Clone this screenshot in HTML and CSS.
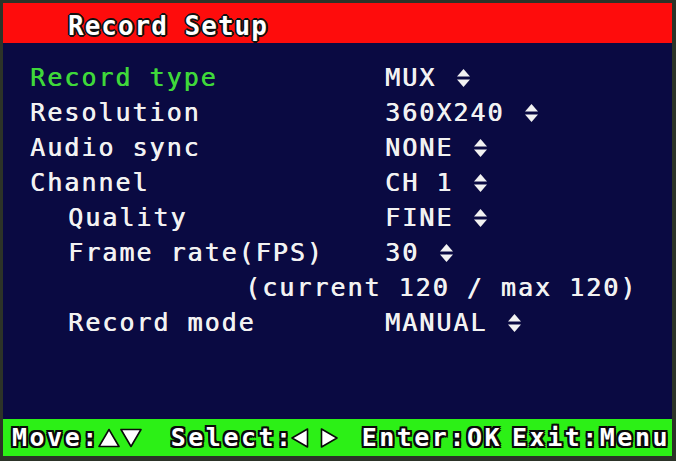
FILE: index.html
```html
<!DOCTYPE html>
<html lang="en">
<head>
  <meta charset="UTF-8">
  <title>Record Setup</title>
  <link rel="stylesheet" href="styles.css">
</head>
<body>
  <div class="screen">
    <div class="header">Record Setup</div>

    <div class="menu">
      <div class="row selected">
        <span class="label">Record type</span>
        <span class="value">MUX <svg class="updown" viewBox="0 0 13 18"><polygon points="6.5,0 13,7.5 0,7.5"/><polygon points="0,10.5 13,10.5 6.5,18"/></svg></span>
      </div>
      <div class="row">
        <span class="label">Resolution</span>
        <span class="value">360X240 <svg class="updown" viewBox="0 0 13 18"><polygon points="6.5,0 13,7.5 0,7.5"/><polygon points="0,10.5 13,10.5 6.5,18"/></svg></span>
      </div>
      <div class="row">
        <span class="label">Audio sync</span>
        <span class="value">NONE <svg class="updown" viewBox="0 0 13 18"><polygon points="6.5,0 13,7.5 0,7.5"/><polygon points="0,10.5 13,10.5 6.5,18"/></svg></span>
      </div>
      <div class="row">
        <span class="label">Channel</span>
        <span class="value">CH 1 <svg class="updown" viewBox="0 0 13 18"><polygon points="6.5,0 13,7.5 0,7.5"/><polygon points="0,10.5 13,10.5 6.5,18"/></svg></span>
      </div>
      <div class="row sub">
        <span class="label">Quality</span>
        <span class="value">FINE <svg class="updown" viewBox="0 0 13 18"><polygon points="6.5,0 13,7.5 0,7.5"/><polygon points="0,10.5 13,10.5 6.5,18"/></svg></span>
      </div>
      <div class="row sub">
        <span class="label">Frame rate(FPS)</span>
        <span class="value">30 <svg class="updown" viewBox="0 0 13 18"><polygon points="6.5,0 13,7.5 0,7.5"/><polygon points="0,10.5 13,10.5 6.5,18"/></svg></span>
      </div>
      <div class="row note">(current 120 / max 120)</div>
      <div class="row sub">
        <span class="label">Record mode</span>
        <span class="value">MANUAL <svg class="updown" viewBox="0 0 13 18"><polygon points="6.5,0 13,7.5 0,7.5"/><polygon points="0,10.5 13,10.5 6.5,18"/></svg></span>
      </div>
    </div>

    <div class="footer">
      <span class="hint move">Move:</span>
      <svg class="key" viewBox="0 0 22 20"><polygon points="11,1.5 21,18.5 1,18.5"/></svg><svg class="key" viewBox="0 0 22 20"><polygon points="1,1.5 21,1.5 11,18.5"/></svg>
      <span class="hint select">Select:</span>
      <svg class="key narrow" viewBox="0 0 18 20"><polygon points="16.5,1 16.5,19 1,10"/></svg><svg class="key narrow right" viewBox="0 0 18 20"><polygon points="1.5,1 1.5,19 17,10"/></svg>
      <span class="hint enter">Enter:OK</span>
      <span class="hint exit">Exit:Menu</span>
    </div>
  </div>
</body>
</html>
```

FILE: styles.css
```css
body {
  margin: 0;
  background-color: #2c3328;
  width: 676px;
  height: 461px;
  overflow: hidden;
}

.screen {
  margin: 3px 4px 0 3px;
  font-family: 'DejaVu Sans Mono', 'Liberation Mono', monospace;
  font-size: 25px;
  letter-spacing: 2px;
  color: #f2f2f2;
}

.header {
  height: 40px;
  line-height: 46px;
  background-color: #fe0c0c;
  padding-left: 65px;
  color: #fff;
  font-size: 26px;
  font-weight: bold;
  letter-spacing: 1px;
  text-shadow: -2px 0 #111, 2px 0 #111, 0 -2px #111, 0 2px #111,
    -1px -1px #111, 1px 1px #111, -1px 1px #111, 1px -1px #111;
}

.menu {
  height: 359px;
  padding-top: 17px;
  background-color: #0a0a42;
  text-shadow: 0.6px 0 currentColor;
}

.row {
  display: flex;
  align-items: center;
  height: 35px;
  padding-left: 27px;
}

.row.selected .label {
  color: #3fd83a;
}

.label {
  width: 355px;
  flex-shrink: 0;
}

.row.sub .label {
  width: 317px;
  padding-left: 38px;
}

.row.note {
  padding-left: 242px;
}

.value {
  display: flex;
  align-items: center;
  white-space: pre;
}

.updown {
  width: 13px;
  height: 18px;
  fill: #f2f2f2;
  margin-left: 4px;
}

.footer {
  display: flex;
  align-items: center;
  height: 37px;
  padding-left: 9px;
  background-color: #2cf016;
  color: #fff;
  font-weight: bold;
  letter-spacing: 2.5px;
  text-shadow: -2px 0 #0a0a0a, 2px 0 #0a0a0a, 0 -2px #0a0a0a, 0 2px #0a0a0a,
    -2px -2px #0a0a0a, 2px 2px #0a0a0a, -2px 2px #0a0a0a, 2px -2px #0a0a0a;
}

.footer > * {
  flex-shrink: 0;
}

.hint {
  white-space: pre;
}

.move {
  margin-right: -2px;
}

.select {
  margin-left: 29px;
  margin-right: -3px;
}

.enter {
  margin-left: 24px;
}

.exit {
  margin-left: 10px;
}

.key {
  width: 22px;
  height: 20px;
  fill: #fff;
  stroke: #0a0a0a;
  stroke-width: 1.6;
  stroke-linejoin: round;
}

.key.narrow {
  width: 18px;
}

.key.right {
  margin-left: 11px;
}
```
